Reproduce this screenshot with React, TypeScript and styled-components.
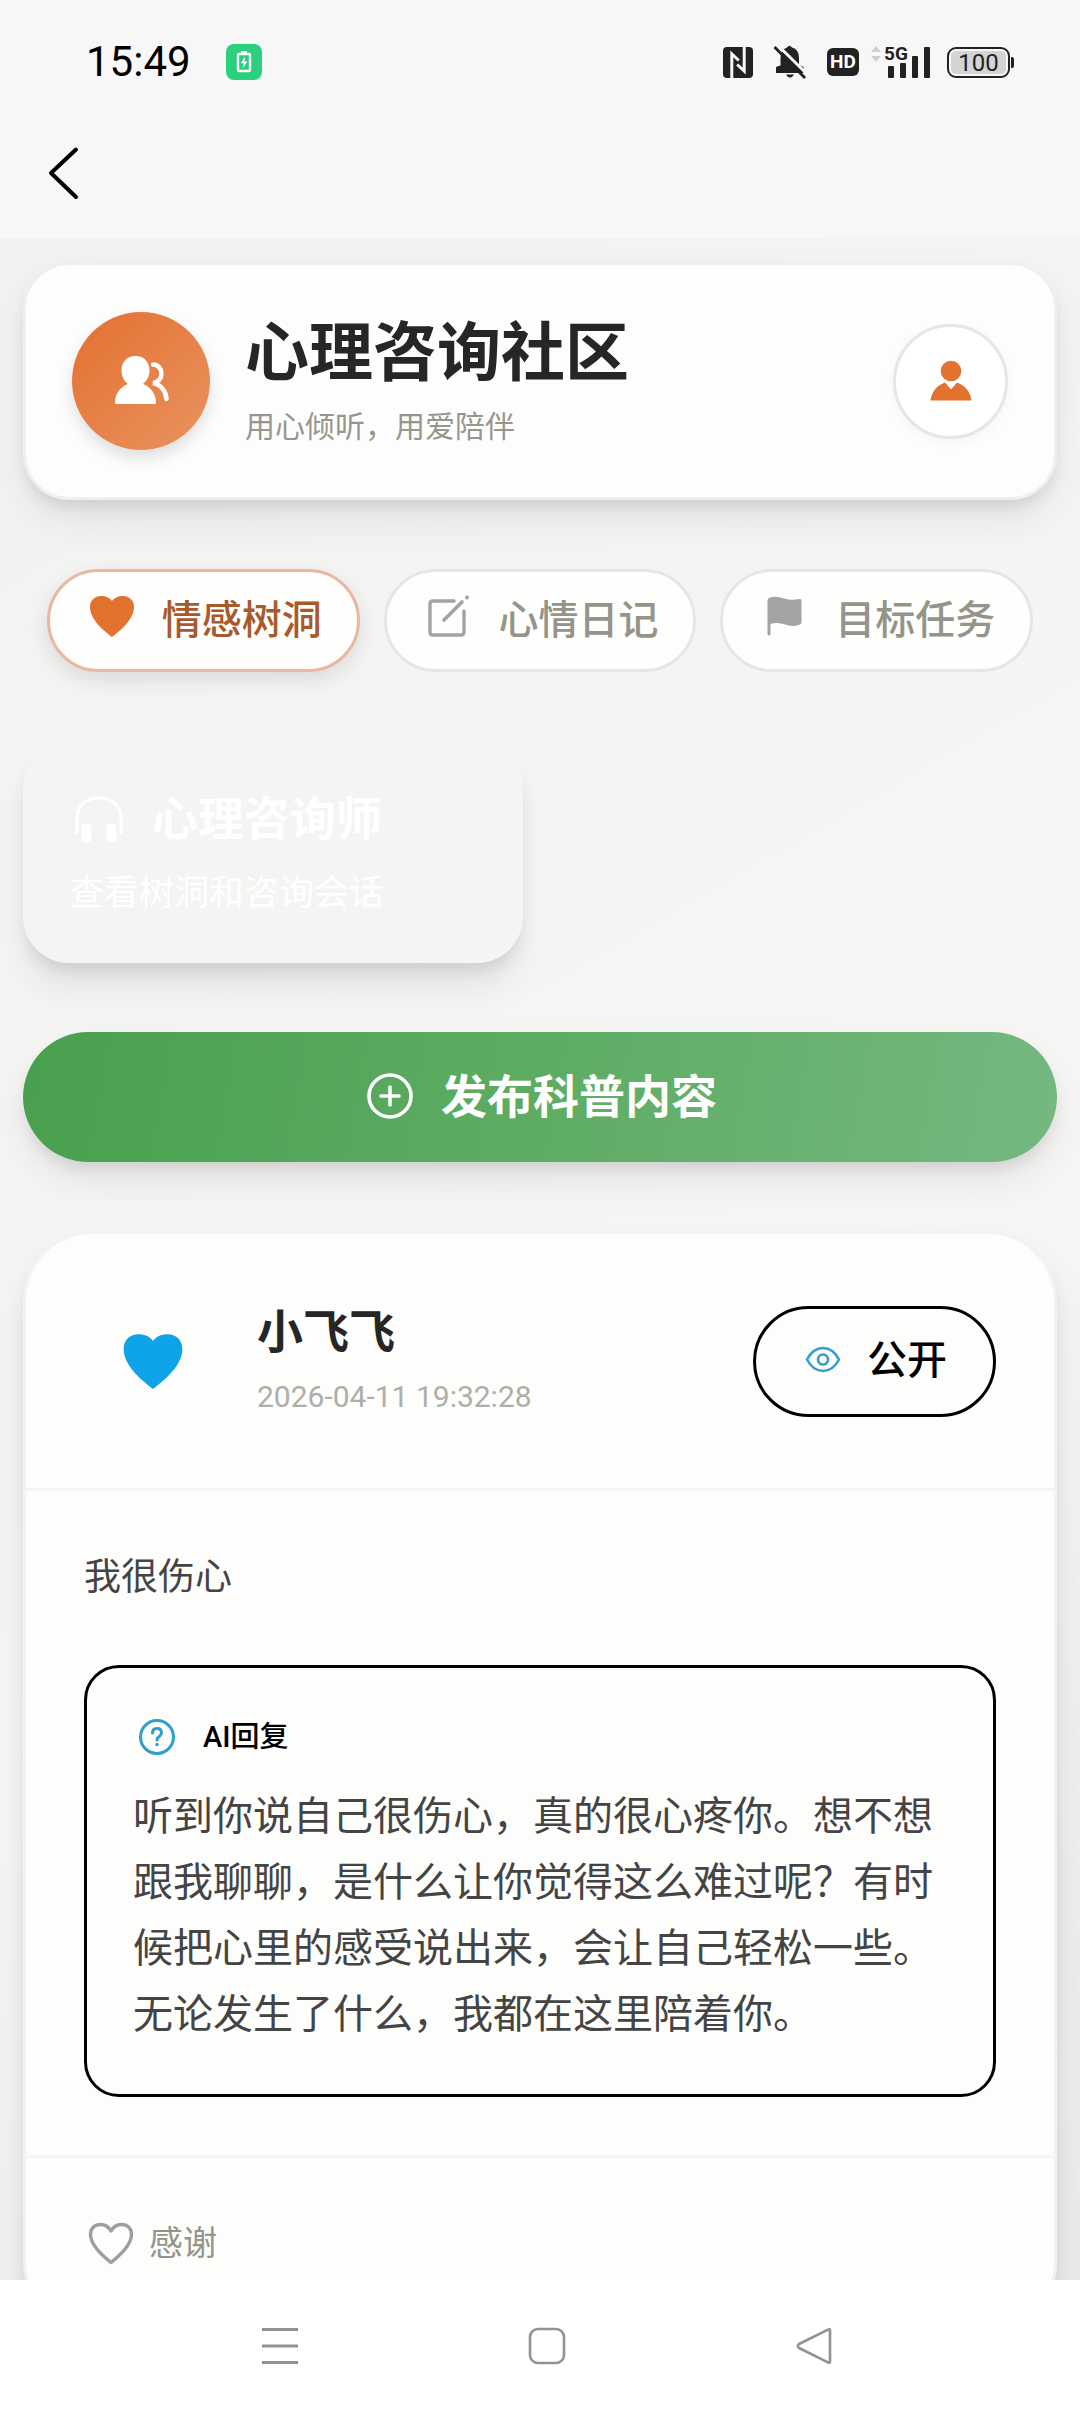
import React from 'react';
import styled, { createGlobalStyle, css } from 'styled-components';

const GlobalStyle = createGlobalStyle`
  * { box-sizing: border-box; }
  body {
    margin: 0;
    font-family: Roboto, "Noto Sans CJK SC", sans-serif;
    color: #262626;
    background: #f7f7f7;
  }
  button {
    font: inherit;
    color: inherit;
    margin: 0;
    padding: 0;
    border: none;
    background: none;
    cursor: pointer;
  }
  h1, h2, p { margin: 0; }
  svg { display: block; flex: none; }
`;

const Screen = styled.div`
  display: flex;
  flex-direction: column;
  height: 100vh;
`;

const Header = styled.header`
  flex: none;
  background: #f7f7f7;
`;

const StatusBar = styled.div`
  display: flex;
  align-items: center;
  height: 108px;
  padding: 16px 66px 0 86px;
`;

const Clock = styled.time`
  font-size: 42px;
  line-height: 48px;
  color: #000;
`;

const ChargeBadge = styled.span`
  display: flex;
  align-items: center;
  justify-content: center;
  width: 36px;
  height: 36px;
  margin-left: 35px;
  border-radius: 8px;
  background: #2bd07f;
`;

const StatusIcons = styled.div`
  display: flex;
  align-items: center;
  gap: 20px;
  margin-left: auto;
  color: #222;
`;

const HdBadge = styled.span`
  width: 32px;
  height: 28px;
  border-radius: 6px;
  background: #222;
  color: #fff;
  font-size: 19px;
  font-weight: 700;
  line-height: 28px;
  text-align: center;
`;

const Network = styled.span`
  display: flex;
  position: relative;
  margin-left: -8px;
`;

const NetworkLabel = styled.span`
  position: absolute;
  left: 13px;
  top: -4px;
  font-size: 19px;
  font-weight: 700;
  line-height: 24px;
`;

const Battery = styled.span`
  display: flex;
  align-items: center;
  gap: 1px;
  margin-left: -4px;

  &::after {
    content: "";
    width: 3px;
    height: 11px;
    border-radius: 0 2px 2px 0;
    background: #222;
  }
`;

const BatteryLevel = styled.span`
  width: 63px;
  height: 31px;
  padding: 2px;
  border: 2px solid #222;
  border-radius: 9px;
  background: #d4d4d4 content-box;
  font-size: 24px;
  line-height: 24px;
  text-align: center;
`;

const TitleBar = styled.div`
  display: flex;
  align-items: center;
  height: 130px;
  padding-left: 44px;
`;

const Main = styled.main`
  flex: 1;
  min-height: 0;
  overflow-y: auto;
  scrollbar-width: none;
  display: flex;
  flex-direction: column;
  gap: 69px;
  padding: 24px 23px;
  background: linear-gradient(150deg, #f2f2f1 0%, #f5f5f3 40%, #f7f6f4 60%, #f0efee 80%, #ecebea 100%);

  > * { flex: none; }
`;

const softShadow = css`
  box-shadow: 0 10px 16px -4px rgba(0, 0, 0, 0.1), 0 20px 40px rgba(0, 0, 0, 0.07);
`;

const Hero = styled.section`
  display: flex;
  align-items: center;
  padding: 46px;
  border: 3px solid #efefee;
  border-radius: 46px;
  background: #fdfdfd;
  background-clip: padding-box;
  ${softShadow}
`;

const HeroAvatar = styled.div`
  display: flex;
  align-items: center;
  justify-content: center;
  width: 138px;
  height: 138px;
  border-radius: 50%;
  background: linear-gradient(135deg, #e47031, #e9935f);
  box-shadow: 0 8px 16px rgba(0, 0, 0, 0.12);
`;

const HeroText = styled.div`
  flex: 1;
  min-width: 0;
  display: flex;
  flex-direction: column;
  gap: 6px;
  margin-left: 35px;
`;

const HeroTitle = styled.h1`
  font-size: 64px;
  font-weight: 700;
  line-height: 86px;
`;

const HeroSubtitle = styled.p`
  font-size: 30px;
  line-height: 48px;
  color: #96968c;
`;

const ProfileButton = styled.button`
  display: flex;
  align-items: center;
  justify-content: center;
  width: 115px;
  height: 115px;
  border: 3px solid #e6e6e6;
  border-radius: 50%;
  background: #fff;
  box-shadow: 0 3px 12px rgba(0, 0, 0, 0.04);
`;

const Tabs = styled.nav`
  display: flex;
  gap: 24px;
  padding: 0 24px;
`;

const Tab = styled.button<{ $active?: boolean }>`
  flex: 1;
  display: flex;
  align-items: center;
  justify-content: center;
  gap: 23px;
  height: 103px;
  border: 3px solid ${(p) => (p.$active ? '#e9b8a0' : '#e6e6e4')};
  border-radius: 52px;
  background: #fefefd;
  color: ${(p) => (p.$active ? '#a95a2c' : '#949489')};
  font-size: 40px;
  font-weight: 500;
  line-height: 54px;
  white-space: nowrap;
  box-shadow: ${(p) => (p.$active ? '0 8px 20px rgba(0, 0, 0, 0.1)' : 'none')};

  svg { margin-bottom: 10px; }
`;

const EntryGrid = styled.div`
  display: grid;
  grid-template-columns: 1fr 1fr;
  gap: 34px;
`;

const EntryCard = styled.button`
  display: flex;
  flex-direction: column;
  gap: 20px;
  padding: 46px;
  border-radius: 46px;
  color: #fff;
  text-align: left;
  box-shadow: 0 12px 16px -4px rgba(0, 0, 0, 0.1), 0 28px 32px rgba(0, 0, 0, 0.06);
`;

const EntryTitle = styled.span`
  display: flex;
  align-items: center;
  gap: 23px;
  font-size: 46px;
  font-weight: 700;
  line-height: 64px;
`;

const EntryNote = styled.span`
  font-size: 35px;
  line-height: 46px;
`;

const PublishButton = styled.button`
  display: flex;
  align-items: center;
  justify-content: center;
  gap: 24px;
  height: 130px;
  border-radius: 65px;
  background: linear-gradient(100deg, #48a04e 0%, #5cab61 45%, #75b880 100%);
  color: #fff;
  font-size: 46px;
  font-weight: 700;
  line-height: 60px;
  ${softShadow}
`;

const Post = styled.article`
  border: 3px solid #f2f2f1;
  border-radius: 69px;
  background: #fdfdfc;
  background-clip: padding-box;
  ${softShadow}
`;

const PostHeader = styled.header`
  display: flex;
  align-items: center;
  padding: 58px;
  border-bottom: 3px solid #f5f5f4;
`;

const PostAvatar = styled.div`
  display: flex;
  align-items: center;
  justify-content: center;
  width: 138px;
  height: 138px;
`;

const Author = styled.div`
  flex: 1;
  min-width: 0;
  display: flex;
  flex-direction: column;
  gap: 12px;
  margin-left: 35px;
`;

const AuthorName = styled.h2`
  font-size: 46px;
  font-weight: 700;
  line-height: 60px;
`;

const PostTime = styled.time`
  font-size: 30px;
  line-height: 46px;
  color: #aeaeaa;
`;

const Visibility = styled.button`
  display: flex;
  align-items: center;
  gap: 23px;
  height: 111px;
  padding: 0 46px;
  border: 3px solid #000;
  border-radius: 58px;
  color: #000;
  font-size: 40px;
  font-weight: 500;
  line-height: 54px;
`;

const PostBody = styled.div`
  display: flex;
  flex-direction: column;
  gap: 58px;
  padding: 58px;
`;

const PostText = styled.p`
  font-size: 37px;
  line-height: 58px;
  color: #444;
`;

const Reply = styled.section`
  display: flex;
  flex-direction: column;
  gap: 24px;
  padding: 46px;
  border: 3px solid #000;
  border-radius: 35px;
`;

const ReplyTitle = styled.h2`
  display: flex;
  align-items: center;
  gap: 24px;
  font-size: 29px;
  font-weight: 500;
  line-height: 46px;
  color: #000;
`;

const ReplyText = styled.p`
  font-size: 40px;
  line-height: 66px;
  color: #444;
`;

const PostFooter = styled.footer`
  display: flex;
  padding: 58px;
  border-top: 3px solid #f5f5f4;
`;

const ThankButton = styled.button`
  display: flex;
  align-items: center;
  gap: 11px;
  font-size: 34px;
  line-height: 52px;
  color: #949489;
`;

const SystemNav = styled.nav`
  flex: none;
  display: flex;
  justify-content: center;
  height: 132px;
  padding-left: 14px;
  background: #fff;
  color: #929292;
`;

const SystemButton = styled.button`
  display: flex;
  align-items: center;
  justify-content: center;
  width: 267px;
`;

const HEART =
  'M27 48 C22 44 5 32 5 18 C5 11 10 7 16 7 C21 7 25 9 27 12 C29 9 33 7 38 7 C44 7 49 11 49 18 C49 32 32 44 27 48Z';

const BatteryGlyph = () => (
  <svg width="16" height="22" viewBox="0 0 16 22" fill="none">
    <path d="M5 0h6v2H5z" fill="#fff" />
    <rect x="2" y="3" width="12" height="17" rx="1" stroke="#fff" strokeWidth="2.4" />
    <path d="M9 5.5 4.8 12.2h2.7L7 17l4.3-6.4H8.6z" fill="#fff" />
  </svg>
);

const NfcIcon = () => (
  <svg width="30" height="31" viewBox="0 0 30 31" fill="none">
    <rect width="30" height="31" rx="4" fill="currentColor" />
    <path d="M8.8 31V7l7 6.5M21.2 0v24l-7-6.5" stroke="#f7f7f7" strokeWidth="3" />
  </svg>
);

const BellOffIcon = () => (
  <svg width="34" height="34" viewBox="0 0 34 34" fill="none">
    <path d="M14 2.6 Q16.5 -1 19 2.6 Q26 4.5 26 13 V20 L30.5 22 V28 H3 V22.5 Q3 21.5 7.5 20.5 V13 Q7.5 5 14 2.6Z" fill="currentColor" />
    <path d="M13 29.5h8q-1.5 3-4 3t-4-3z" fill="currentColor" />
    <path d="M4.500 0 34 29" stroke="#f7f7f7" strokeWidth="3" />
    <path d="M1.500 2 32 33" stroke="currentColor" strokeWidth="2.8" />
  </svg>
);

const SignalIcon = () => (
  <svg width="60" height="33" viewBox="0 0 60 33" fill="currentColor">
    <path d="M0 6 5 0l5 6zM0 10h10l-5 6z" fill="#cfcfcf" />
    <rect x="17" y="20" width="6" height="12" rx="1" />
    <rect x="29" y="17" width="6" height="15" rx="1" />
    <rect x="41" y="10" width="6" height="22" rx="1" />
    <rect x="53" y="1" width="6" height="31" rx="1" />
  </svg>
);

const ChevronIcon = () => (
  <svg width="38" height="56" viewBox="0 0 38 56" fill="none" stroke="#000" strokeWidth="4" strokeLinecap="round" strokeLinejoin="round">
    <path d="M32 4.500 7 28l25 24" />
  </svg>
);

const PeopleIcon = () => (
  <svg width="58" height="58" viewBox="0 0 58 58" fill="none">
    <path d="M23.500 4c8.500 0 14 6 14 14.500 0 6-3 10.500-6.500 13.500 8 3 13 10 13 18.500 0 1-.5 1.500-1.500 1.500H4.500C3.500 52 3 51.500 3 50.500 3 42 8 35 16 32c-4-3-6.500-7.500-6.500-13.500C9.500 10 15 4 23.500 4Z" fill="#fff" />
    <path d="M41 12.500c5 0 8.500 4 8.500 9S46 30.500 41 31c8 1.500 13 8 13.500 16" stroke="#fff" strokeWidth="4.500" strokeLinecap="round" />
  </svg>
);

const PersonIcon = () => (
  <svg width="58" height="58" viewBox="0 0 58 58" fill="#e3722f">
    <circle cx="29" cy="19" r="10.300" />
    <path d="M23 30.500 29 37.500l6-7c8 2.500 13.500 9.500 14.500 18h-41C9.500 40 15 33 23 30.500Z" />
  </svg>
);

const HeartIcon = ({ size = 54, color }: { size?: number; color: string }) => (
  <svg width={size} height={size} viewBox="0 0 54 54" fill={color}>
    <path d={HEART} />
  </svg>
);

const HeartOutlineIcon = () => (
  <svg width="54" height="54" viewBox="0 0 54 54" fill="none" stroke="#9e9e9e" strokeWidth="3.400" strokeLinejoin="round">
    <path d="M27 46.500C22 42.500 6.500 30.500 6.500 18.500 6.500 12 11 8.500 16.500 8.500c5 0 8.500 3 10.500 6.500 2-3.500 5.500-6.500 10.500-6.500 5.500 0 10 3.500 10 10C47.500 30.500 32 42.500 27 46.500Z" />
  </svg>
);

const EditIcon = () => (
  <svg width="54" height="54" viewBox="0 0 54 54" fill="none" stroke="#a3a3a3" strokeWidth="3.400" strokeLinecap="round">
    <path d="M32 12H11q-3 0-3 3v28q0 3 3 3h28q3 0 3-3V22" />
    <path d="M22 31 40 13" strokeWidth="3.600" />
    <circle cx="45" cy="8.500" r="2" fill="#a3a3a3" stroke="none" />
  </svg>
);

const FlagIcon = () => (
  <svg width="54" height="54" viewBox="0 0 54 54" fill="#a3a3a3">
    <path d="M9.500 12q0-3 2.500-3.500c5-1.500 9-.5 14 1 5 1.500 10 1.500 15.500.5 1.500 0 2 .5 2 1.500V33q0 2.500-2.500 3c-5 1.500-9 1-14-.5-6-1.500-10-2-14.500-.5v10q0 1.500-1.500 1.500T9.500 45Z" />
  </svg>
);

const HeadphonesIcon = () => (
  <svg width="60" height="60" viewBox="0 0 60 60" fill="none" stroke="#fff" strokeWidth="3">
    <path d="M8 44V29C8 17 17 9 30 9s22 8 22 20v15" strokeLinecap="round" />
    <rect x="14" y="36" width="7" height="16" rx="3" fill="#fff" />
    <rect x="39" y="36" width="7" height="16" rx="3" fill="#fff" />
  </svg>
);

const PlusCircleIcon = () => (
  <svg width="54" height="54" viewBox="0 0 54 54" fill="none" stroke="#fff" strokeWidth="3.600" strokeLinecap="round">
    <circle cx="27" cy="26" r="21" />
    <path d="M27 17v18M18 26h18" />
  </svg>
);

const EyeIcon = () => (
  <svg width="42" height="42" viewBox="0 0 42 42" fill="none" stroke="#2f9fcb" strokeWidth="2.600" strokeLinejoin="round">
    <path d="M5 19.500C9 12 14.500 8 21 8s12 4 16 11.500C33 27 27.500 31 21 31S9 27 5 19.500Z" />
    <circle cx="21" cy="19.500" r="5" />
  </svg>
);

const QuestionIcon = () => (
  <svg width="46" height="46" viewBox="0 0 46 46" fill="none" stroke="#2f9fcb" strokeWidth="3" strokeLinecap="round">
    <circle cx="24" cy="23" r="16.500" />
    <path d="M19.500 19c0-3 2-4.500 4.500-4.500s4.500 1.500 4.500 4.300c0 3.700-4.500 3.700-4.500 7.200" />
    <circle cx="24" cy="30.500" r="1" fill="#2f9fcb" strokeWidth="1.500" />
  </svg>
);

const tabs = [
  { label: '情感树洞', icon: <HeartIcon color="#e3722f" />, active: true },
  { label: '心情日记', icon: <EditIcon />, active: false },
  { label: '目标任务', icon: <FlagIcon />, active: false },
];

export default function App() {
  return (
    <>
      <GlobalStyle />
      <Screen>
        <Header>
          <StatusBar>
            <Clock>15:49</Clock>
            <ChargeBadge>
              <BatteryGlyph />
            </ChargeBadge>
            <StatusIcons>
              <NfcIcon />
              <BellOffIcon />
              <HdBadge>HD</HdBadge>
              <Network>
                <SignalIcon />
                <NetworkLabel>5G</NetworkLabel>
              </Network>
              <Battery>
                <BatteryLevel>100</BatteryLevel>
              </Battery>
            </StatusIcons>
          </StatusBar>
          <TitleBar>
            <button type="button" aria-label="返回">
              <ChevronIcon />
            </button>
          </TitleBar>
        </Header>

        <Main>
          <Hero>
            <HeroAvatar>
              <PeopleIcon />
            </HeroAvatar>
            <HeroText>
              <HeroTitle>心理咨询社区</HeroTitle>
              <HeroSubtitle>用心倾听，用爱陪伴</HeroSubtitle>
            </HeroText>
            <ProfileButton type="button" aria-label="个人中心">
              <PersonIcon />
            </ProfileButton>
          </Hero>

          <Tabs>
            {tabs.map((tab) => (
              <Tab key={tab.label} type="button" $active={tab.active} aria-pressed={tab.active}>
                {tab.icon}
                {tab.label}
              </Tab>
            ))}
          </Tabs>

          <EntryGrid>
            <EntryCard type="button">
              <EntryTitle>
                <HeadphonesIcon />
                心理咨询师
              </EntryTitle>
              <EntryNote>查看树洞和咨询会话</EntryNote>
            </EntryCard>
          </EntryGrid>

          <PublishButton type="button">
            <PlusCircleIcon />
            发布科普内容
          </PublishButton>

          <Post>
            <PostHeader>
              <PostAvatar>
                <HeartIcon size={72} color="#0fa3e8" />
              </PostAvatar>
              <Author>
                <AuthorName>小飞飞</AuthorName>
                <PostTime dateTime="2026-04-11T19:32:28">2026-04-11 19:32:28</PostTime>
              </Author>
              <Visibility type="button">
                <EyeIcon />
                公开
              </Visibility>
            </PostHeader>
            <PostBody>
              <PostText>我很伤心</PostText>
              <Reply>
                <ReplyTitle>
                  <QuestionIcon />
                  AI回复
                </ReplyTitle>
                <ReplyText>
                  听到你说自己很伤心，真的很心疼你。想不想跟我聊聊，是什么让你觉得这么难过呢？有时候把心里的感受说出来，会让自己轻松一些。无论发生了什么，我都在这里陪着你。
                </ReplyText>
              </Reply>
            </PostBody>
            <PostFooter>
              <ThankButton type="button">
                <HeartOutlineIcon />
                感谢
              </ThankButton>
            </PostFooter>
          </Post>
        </Main>

        <SystemNav>
          <SystemButton type="button" aria-label="最近任务">
            <svg width="40" height="40" viewBox="0 0 40 40" stroke="currentColor" strokeWidth="3">
              <path d="M2 3.500h36M2 20h36M2 36.500h36" />
            </svg>
          </SystemButton>
          <SystemButton type="button" aria-label="主屏幕">
            <svg width="40" height="40" viewBox="0 0 40 40" fill="none" stroke="currentColor" strokeWidth="2.600">
              <rect x="3" y="3" width="34" height="34" rx="8" />
            </svg>
          </SystemButton>
          <SystemButton type="button" aria-label="返回上一页">
            <svg width="40" height="40" viewBox="0 0 40 40" fill="none" stroke="currentColor" strokeWidth="2.600" strokeLinejoin="round">
              <path d="M36 4.500v31q0 2-2 .8L5 22q-2.500-2 0-4L34 3.700q2-1.200 2 .8Z" />
            </svg>
          </SystemButton>
        </SystemNav>
      </Screen>
    </>
  );
}
